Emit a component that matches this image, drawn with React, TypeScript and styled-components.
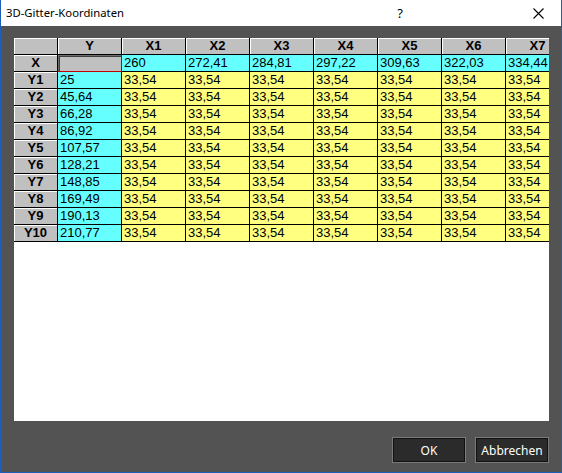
import React from "react";
import styled, { createGlobalStyle } from "styled-components";

const GlobalStyle = createGlobalStyle`
  html, body {
    margin: 0;
    padding: 0;
    background: #fff;
  }
`;

const columns = ["X1", "X2", "X3", "X4", "X5", "X6", "X7"];
const xValues = ["260", "272,41", "284,81", "297,22", "309,63", "322,03", "334,44"];
const rows = [
  { name: "Y1", y: "25" },
  { name: "Y2", y: "45,64" },
  { name: "Y3", y: "66,28" },
  { name: "Y4", y: "86,92" },
  { name: "Y5", y: "107,57" },
  { name: "Y6", y: "128,21" },
  { name: "Y7", y: "148,85" },
  { name: "Y8", y: "169,49" },
  { name: "Y9", y: "190,13" },
  { name: "Y10", y: "210,77" },
];

export default function App() {
  return (
    <Window>
      <GlobalStyle />
      <TitleBar>
        <Title>3D-Gitter-Koordinaten</Title>
        <HelpButton>?</HelpButton>
        <CloseButton>
          <svg width="11" height="11" viewBox="0 0 11 11">
            <path d="M0.5 0.5 L10.5 10.5 M10.5 0.5 L0.5 10.5" stroke="#000" strokeWidth="1.1" />
          </svg>
        </CloseButton>
      </TitleBar>
      <Body>
        <GridArea>
          <Table>
            <Row>
              <HeadCell $first />
              <HeadCell>Y</HeadCell>
              {columns.map((c) => (
                <HeadCell key={c}>{c}</HeadCell>
              ))}
            </Row>
            <Row>
              <HeadCell $first>X</HeadCell>
              <SelectedCell />
              {xValues.map((v) => (
                <Cell key={v} $tone="cyan">
                  {v}
                </Cell>
              ))}
            </Row>
            {rows.map((r) => (
              <Row key={r.name}>
                <HeadCell $first>{r.name}</HeadCell>
                <Cell $tone="cyan">{r.y}</Cell>
                {columns.map((c) => (
                  <Cell key={c} $tone="yellow">
                    33,54
                  </Cell>
                ))}
              </Row>
            ))}
          </Table>
        </GridArea>
        <ButtonRow>
          <DialogButton>OK</DialogButton>
          <DialogButton>Abbrechen</DialogButton>
        </ButtonRow>
      </Body>
    </Window>
  );
}

const Window = styled.div`
  width: 562px;
  height: 473px;
  box-sizing: border-box;
  display: flex;
  flex-direction: column;
  border: 1px solid #1c5fb8;
  border-top: none;
  background: #535353;
  overflow: hidden;
`;

const TitleBar = styled.div`
  height: 26px;
  flex-shrink: 0;
  display: flex;
  align-items: center;
  background: #fff;
  font-family: "Noto Sans", "Open Sans", sans-serif;
  font-size: 11.3px;
  color: #000;
`;

const Title = styled.div`
  flex: 1;
  padding-left: 5px;
  padding-bottom: 1px;
`;

const HelpButton = styled.div`
  width: 46px;
  text-align: center;
  font-size: 13px;
`;

const CloseButton = styled.div`
  width: 46px;
  height: 26px;
  display: flex;
  align-items: center;
  justify-content: center;
  margin-left: 92px;
  margin-right: 0;
`;

const Body = styled.div`
  flex: 1;
  display: flex;
  flex-direction: column;
  padding: 12px 12px 9px 13px;
`;

const GridArea = styled.div`
  height: 383px;
  background: #fff;
  overflow: hidden;
`;

const Table = styled.div`
  display: flex;
  flex-direction: column;
  font-family: "Liberation Sans", Arial, sans-serif;
  font-size: 13px;
  color: #000;
`;

const Row = styled.div`
  display: flex;
  height: 17px;
`;

const HeadCell = styled.div<{ $first?: boolean }>`
  width: ${(p) => (p.$first ? "44px" : "64px")};
  flex-shrink: 0;
  box-sizing: border-box;
  background: #c0c0c0;
  border-right: 1px solid #000;
  border-bottom: 1px solid #000;
  box-shadow: inset 1px 1px 0 #fff;
  font-weight: bold;
  text-align: center;
  line-height: 16px;
`;

const Cell = styled.div<{ $tone: "cyan" | "yellow" }>`
  width: 64px;
  flex-shrink: 0;
  box-sizing: border-box;
  background: ${(p) => (p.$tone === "cyan" ? "#66ffff" : "#ffff80")};
  border-right: 1px solid #000;
  border-bottom: 1px solid #000;
  padding-left: 2px;
  line-height: 16px;
  white-space: nowrap;
  overflow: hidden;
`;

const SelectedCell = styled.div`
  width: 64px;
  flex-shrink: 0;
  box-sizing: border-box;
  background: #c0c0c0;
  border-right: 1px solid #c00000;
  border-bottom: 1px solid #c00000;
  box-shadow: inset 1px 1px 0 #6e6e6e, inset 2px 2px 0 #404040;
`;

const ButtonRow = styled.div`
  display: flex;
  justify-content: flex-end;
  gap: 9px;
  margin-top: 16px;
`;

const DialogButton = styled.div`
  width: 74px;
  height: 26px;
  box-sizing: border-box;
  display: flex;
  align-items: center;
  justify-content: center;
  background: #2b2b2b;
  border: 1px solid #7a7a7a;
  box-shadow: inset 0 0 0 1px #111;
  color: #fff;
  font-family: "Noto Sans", "Open Sans", sans-serif;
  font-size: 12px;
`;
